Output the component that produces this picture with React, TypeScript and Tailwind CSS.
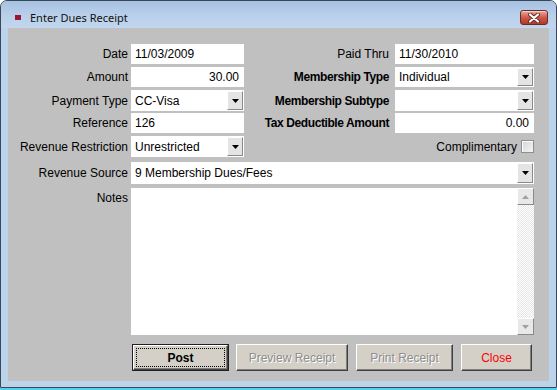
import type { ReactNode } from "react";

const sans = "font-['Liberation_Sans',Arial,sans-serif]";

function Label({
  children,
  width,
  bold,
}: {
  children: ReactNode;
  width: string;
  bold?: boolean;
}) {
  return (
    <div
      className={`${width} shrink-0 self-center text-right leading-[14px] whitespace-nowrap ${
        bold ? "font-bold tracking-[-0.4px]" : ""
      }`}
    >
      {children}
    </div>
  );
}

function TextBox({
  value,
  width,
  right,
}: {
  value: string;
  width: string;
  right?: boolean;
}) {
  return (
    <div
      className={`${width} flex h-full items-center bg-white pl-[4px] pr-[5px] ${
        right ? "justify-end" : ""
      }`}
    >
      {value}
    </div>
  );
}

function Arrow({ down = true, color = "#000" }: { down?: boolean; color?: string }) {
  return (
    <svg width="7" height="4" viewBox="0 0 7 4">
      <path d={down ? "M0 0h7L3.5 4z" : "M0 4h7L3.5 0z"} fill={color} />
    </svg>
  );
}

function DropButton() {
  return (
    <div className="my-[1px] mr-[1px] flex w-[16px] items-center justify-center border border-t-white border-l-white border-r-[#8a8a8a] border-b-[#8a8a8a] bg-[#e4e4e4]">
      <Arrow />
    </div>
  );
}

function Select({ value, width }: { value: string; width: string }) {
  return (
    <div className={`${width} flex h-full bg-white`}>
      <div className="flex flex-1 items-center pl-[4px]">{value}</div>
      <DropButton />
    </div>
  );
}

function ScrollButton({ down }: { down?: boolean }) {
  return (
    <div className="flex h-[17px] items-center justify-center border border-t-white border-l-white border-r-[#8a8a8a] border-b-[#8a8a8a] bg-[#e8e8e8]">
      <Arrow down={down} color="#a0a0a0" />
    </div>
  );
}

function Button({
  children,
  width,
  tone = "normal",
}: {
  children: ReactNode;
  width: string;
  tone?: "normal" | "disabled" | "danger";
}) {
  const text =
    tone === "disabled"
      ? "text-[#8e8e8e] [text-shadow:1px_1px_0_#fff]"
      : tone === "danger"
        ? "text-[#ff0000]"
        : "text-black";
  return (
    <div
      className={`${width} flex h-[27px] items-center justify-center border border-t-white border-l-white border-r-[#404040] border-b-[#404040] bg-[#d4d0c8] shadow-[inset_-1px_-1px_0_#808080] ${text}`}
    >
      {children}
    </div>
  );
}

function TitleBar() {
  return (
    <div className="flex h-[27px] shrink-0 bg-gradient-to-b from-[#a7c1e2] via-[#b8cfea] to-[#c2d7ee]">
      <div className="ml-[14px] mt-[14px] h-[5px] w-[6px] bg-[#9c1538]" />
      <div className="ml-[9px] mt-[9px] font-['Noto_Sans','Open_Sans',sans-serif] text-[11px] leading-[16px] text-[#111]">
        Enter Dues Receipt
      </div>
      <div className="ml-auto mr-[8px] mt-[9px] flex h-[15px] w-[28px] items-center justify-center rounded-[3px] border border-[#6b2a22] bg-gradient-to-b from-[#e9a99d] via-[#cf5a49] to-[#b3382a] shadow-[inset_0_1px_0_rgba(255,255,255,0.5)]">
        <svg width="12" height="10" viewBox="0 0 12 10">
          <path d="M2 1.5L10 8.5M10 1.5L2 8.5" stroke="#5a2a24" strokeWidth="4" strokeLinecap="round" />
          <path d="M2 1.5L10 8.5M10 1.5L2 8.5" stroke="#fff" strokeWidth="2.2" strokeLinecap="round" />
        </svg>
      </div>
    </div>
  );
}

export default function App() {
  return (
    <div className="flex h-[390px] w-[557px] flex-col bg-white">
      <div className="flex h-[388px] flex-col overflow-hidden rounded-t-[7px] border border-[#3b4656] bg-[#bcd3ec]">
        <TitleBar />
        <div
          className={`mx-[7px] mb-[6px] flex flex-1 flex-col bg-[#c0c0c0] text-[12px] text-black ${sans}`}
        >
          <div className="mt-[16px] flex h-[20px]">
            <Label width="w-[123px] pr-[3px]">Date</Label>
            <TextBox width="w-[113px]" value="11/03/2009" />
            <Label width="w-[151px] pr-[6px]">Paid Thru</Label>
            <TextBox width="w-[139px]" value="11/30/2010" />
          </div>

          <div className="mt-[3px] flex h-[20px]">
            <Label width="w-[123px] pr-[3px]">Amount</Label>
            <TextBox width="w-[113px]" value="30.00" right />
            <Label width="w-[151px] pr-[6px]" bold>
              Membership Type
            </Label>
            <Select width="w-[139px]" value="Individual" />
          </div>

          <div className="mt-[3px] flex h-[21px]">
            <Label width="w-[123px] pr-[3px]">Payment Type</Label>
            <Select width="w-[113px]" value="CC-Visa" />
            <Label width="w-[151px] pr-[6px]" bold>
              Membership Subtype
            </Label>
            <Select width="w-[139px]" value="" />
          </div>

          <div className="mt-[2px] flex h-[20px]">
            <Label width="w-[123px] pr-[3px]">Reference</Label>
            <TextBox width="w-[113px]" value="126" />
            <Label width="w-[151px] pr-[6px]" bold>
              Tax Deductible Amount
            </Label>
            <TextBox width="w-[139px]" value="0.00" right />
          </div>

          <div className="mt-[3px] flex h-[21px]">
            <Label width="w-[123px] pr-[3px]">Revenue Restriction</Label>
            <Select width="w-[113px]" value="Unrestricted" />
            <div className="flex w-[290px] items-center justify-end">
              <span className="leading-[14px]">Complimentary</span>
              <div className="ml-[4px] h-[13px] w-[13px] border border-[#8e8e8e] bg-gradient-to-br from-[#d6d6d6] to-[#f4f4f4] shadow-[inset_1px_1px_0_#fff]" />
            </div>
          </div>

          <div className="mt-[5px] flex h-[22px]">
            <Label width="w-[123px] pr-[3px]">Revenue Source</Label>
            <Select width="w-[403px]" value="9 Membership Dues/Fees" />
          </div>

          <div className="mt-[4px] flex h-[147px]">
            <div className="w-[123px] shrink-0 pr-[3px] pt-[3px] text-right leading-[14px]">
              Notes
            </div>
            <div className="flex w-[403px] bg-white">
              <div className="flex-1" />
              <div className="flex w-[17px] flex-col">
                <ScrollButton down={false} />
                <div className="flex-1 bg-[repeating-conic-gradient(#e6e6e6_0_25%,#ffffff_0_50%)] bg-[length:2px_2px]" />
                <ScrollButton down />
              </div>
            </div>
          </div>

          <div className="mt-[9px] flex h-[27px] pl-[124px]">
            <div className="flex h-[27px] w-[97px] border border-[#202020] bg-[#d4d0c8]">
              <div className="flex flex-1 border border-t-white border-l-white border-r-[#404040] border-b-[#404040] shadow-[inset_-1px_-1px_0_#808080]">
                <div className="m-[2px] flex flex-1 items-center justify-center border border-dotted border-black font-bold">
                  Post
                </div>
              </div>
            </div>
            <div className="ml-[7px]">
              <Button width="w-[112px]" tone="disabled">
                Preview Receipt
              </Button>
            </div>
            <div className="ml-[8px]">
              <Button width="w-[97px]" tone="disabled">
                Print Receipt
              </Button>
            </div>
            <div className="ml-[8px]">
              <Button width="w-[71px]" tone="danger">
                Close
              </Button>
            </div>
          </div>
        </div>
      </div>
      <div className="h-[2px] bg-[#52d0ec]" />
    </div>
  );
}
